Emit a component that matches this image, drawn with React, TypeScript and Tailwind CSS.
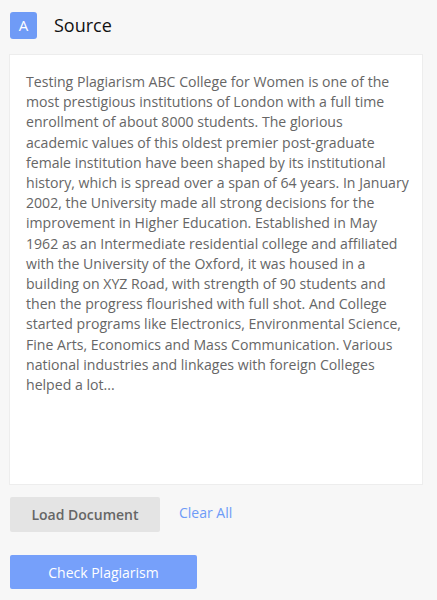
import React from "react";

const lines = [
  "Testing Plagiarism ABC College for Women is one of the",
  "most prestigious institutions of London with a full time",
  "enrollment of about 8000 students. The glorious",
  "academic values of this oldest premier post-graduate",
  "female institution have been shaped by its institutional",
  "history, which is spread over a span of 64 years. In January",
  "2002, the University made all strong decisions for the",
  "improvement in Higher Education. Established in May",
  "1962 as an Intermediate residential college and affiliated",
  "with the University of the Oxford, it was housed in a",
  "building on XYZ Road, with strength of 90 students and",
  "then the progress flourished with full shot. And College",
  "started programs like Electronics, Environmental Science,",
  "Fine Arts, Economics and Mass Communication. Various",
  "national industries and linkages with foreign Colleges",
  "helped a lot...",
];

function SourcePanel() {
  return (
    <div className="min-h-[600px] w-[437px] bg-[#f7f7f7] pt-[12px] font-['Open_Sans','Noto_Sans',sans-serif]">
      <div className="flex h-[27px] items-center gap-[17px] px-[10px]">
        <div className="flex h-[27px] w-[27px] items-center justify-center rounded-[3px] bg-[#6f9bf6] text-[15px] text-white">
          A
        </div>
        <h2 className="text-[18px] text-[#111]">Source</h2>
      </div>

      <div className="ml-[9px] mt-[15px] h-[431px] w-[414px] border border-[#ededed] bg-white px-[16px] pt-[17px]">
        <p className="text-[14.1px] leading-[20.2px] text-[#666]">
          {lines.map((l, i) => (
            <span key={i} className="block whitespace-nowrap">
              {l}
            </span>
          ))}
        </p>
      </div>

      <div className="mt-[12px] flex items-center gap-[19px] px-[10px]">
        <button className="h-[35px] w-[150px] rounded-[2px] bg-[#e4e4e4] text-[14px] font-semibold text-[#666]">
          Load Document
        </button>
        <button className="-mt-[4px] text-[14px] text-[#6e9bf7]">Clear All</button>
      </div>

      <div className="mt-[23px] px-[10px]">
        <button className="h-[34px] w-[187px] rounded-[2px] bg-[#76a0fa] text-[14px] text-white">
          Check Plagiarism
        </button>
      </div>
    </div>
  );
}

export default function App() {
  return <SourcePanel />;
}
